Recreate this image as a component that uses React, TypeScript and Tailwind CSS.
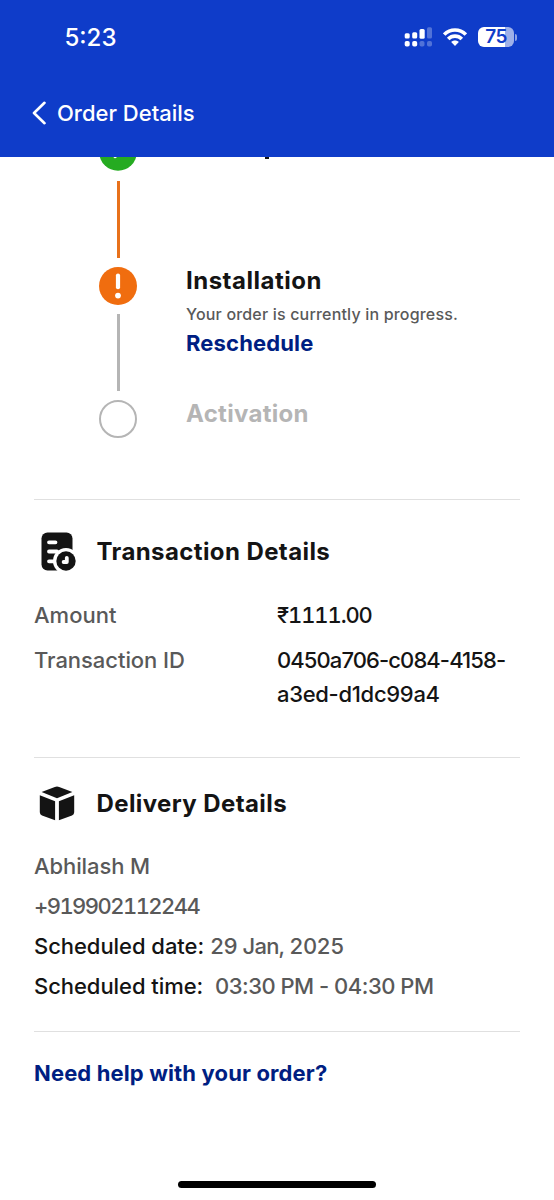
import type { ReactNode } from "react";

function StatusBar() {
  return (
    <div className="flex h-[74px] items-center justify-between pr-[37px] pl-[64.5px]">
      <span className="pt-[2px] text-[24px] leading-[30px] font-medium">5:23</span>
      <div className="flex items-center">
        <svg className="h-5 w-[29px]" viewBox="0 0 29 20" fill="#fff">
          <rect x="0.7" y="6.2" width="5" height="5.2" rx="1.5" />
          <rect x="8.2" y="5.2" width="5" height="6.2" rx="1.5" />
          <rect x="15.5" y="2" width="5.2" height="9.8" rx="1.5" />
          <rect x="23" y="0.2" width="5" height="11.4" rx="1.5" opacity="0.28" />
          <rect x="0.7" y="14" width="5" height="5.5" rx="1.8" />
          <rect x="8.2" y="14" width="5" height="5.5" rx="1.8" />
          <rect x="15.5" y="14" width="5" height="5.5" rx="1.8" opacity="0.28" />
          <rect x="23" y="14" width="5" height="5.5" rx="1.8" opacity="0.28" />
        </svg>
        <svg className="ml-[10px] h-[19px] w-6" viewBox="0 0 24 19" fill="none" stroke="#fff" strokeWidth="3.6">
          <path d="M1.2 6.6C7.2 0.4 16.8 0.4 22.8 6.6" />
          <path d="M5.2 11C9 7.2 15 7.2 18.8 11" />
          <path d="M12 18L8.2 14.1C10.2 12.1 13.8 12.1 15.8 14.1Z" fill="#fff" stroke="none" />
        </svg>
        <div className="ml-[11px] flex h-5 w-[36px] items-center justify-center rounded-[6px] bg-linear-to-r from-white from-74% to-[#9fb0e9] to-74% text-[19px] leading-5 font-semibold tracking-[-0.5px] text-[#0f3cc9]">
          75
        </div>
        <div className="ml-[1px] h-[7px] w-[2px] rounded-r-full bg-[#8fa3e5]" />
      </div>
    </div>
  );
}

function SectionTitle({ icon, children }: { icon: ReactNode; children: ReactNode }) {
  return (
    <div className="flex h-10 items-center">
      <div className="w-[62.5px] shrink-0">{icon}</div>
      <h2 className="pt-[2px] text-[24px] leading-10 font-bold tracking-[0.4px] whitespace-nowrap">{children}</h2>
    </div>
  );
}

export default function App() {
  return (
    <div className="flex h-[1200px] w-[554px] flex-col overflow-hidden bg-white font-['Inter','Liberation_Sans',sans-serif] text-[22px] font-medium text-[#141414]">
      <header className="h-[157px] shrink-0 bg-[#0f3cc9] text-white">
        <StatusBar />
        <div className="flex h-[78px] items-center pl-[32px]">
          <svg className="h-6 w-[15px]" viewBox="0 0 15 24" fill="none" stroke="#fff" strokeWidth="2.6" strokeLinecap="round" strokeLinejoin="round">
            <path d="M12.5 1.8L2 12L12.5 22.2" />
          </svg>
          <h1 className="ml-[10px] text-[22px] leading-[30px] font-medium">Order Details</h1>
        </div>
      </header>

      <main className="flex flex-col px-[34px]">
        <section className="flex h-[342px] overflow-hidden pl-[65px]">
          <div className="flex w-[38px] flex-col items-center">
            <svg className="h-[14px] w-[38px] shrink-0" viewBox="0 0 38 14">
              <circle cx="19" cy="-5" r="18.8" fill="#25ab21" />
              <path d="M12.5 -4L16.2 -0.6L20 -4.4" fill="none" stroke="#fff" strokeWidth="3.4" strokeLinecap="round" strokeLinejoin="round" />
            </svg>
            <div className="mt-[9.5px] h-[77px] w-[3px] shrink-0 bg-[#e8711b]" />
            <svg className="mt-[9px] h-[38px] w-[38px] shrink-0" viewBox="0 0 38 38">
              <circle cx="19" cy="19" r="19" fill="#f06d0f" />
              <path d="M19 8.6V20.2" stroke="#fff" strokeWidth="4.2" strokeLinecap="round" />
              <circle cx="19" cy="28.6" r="2.9" fill="#fff" />
            </svg>
            <div className="mt-[9.5px] h-[77px] w-[3px] shrink-0 bg-[#b5b5b5]" />
            <div className="mt-[9px] h-[38px] w-[38px] shrink-0 rounded-full border-[2.5px] border-[#b5b5b5]" />
          </div>
          <div className="flex flex-col pl-[49px] whitespace-nowrap">
            <div className="ml-[79px] h-[2px] w-[4px] bg-[#141414]" />
            <h2 className="mt-[106px] text-[24px] leading-8 font-bold tracking-[0.5px]">Installation</h2>
            <p className="mt-[5px] text-[16px] leading-6 tracking-[0.18px] text-[#595959]">Your order is currently in progress.</p>
            <a className="mt-[1px] text-[22px] leading-8 font-bold tracking-[0.15px] text-[#001e82]">Reschedule</a>
            <h2 className="mt-[39px] text-[24px] leading-8 font-bold tracking-[0.3px] text-[#b5b5b5]">Activation</h2>
          </div>
        </section>

        <section className="h-[258px] border-t-[1.5px] border-[#e0e0e0] pt-[31px]">
          <SectionTitle
            icon={
              <svg className="ml-[7px] h-[39px] w-[36px]" viewBox="0 0 36 39">
                <rect x="0.5" y="0.5" width="31" height="38" rx="6" fill="#141414" />
                <path d="M8 10.3H14.5M8 19.5H16M8 29.3H13" stroke="#fff" strokeWidth="3.8" strokeLinecap="round" />
                <circle cx="25" cy="29" r="13" fill="#fff" />
                <circle cx="25" cy="29" r="9.7" fill="#141414" />
                <path d="M25.8 25.8V30H22.6" fill="none" stroke="#fff" strokeWidth="3.8" strokeLinecap="round" strokeLinejoin="round" />
              </svg>
            }
          >
            Transaction Details
          </SectionTitle>
          <dl className="mt-[27px] grid grid-cols-[243px_1fr] gap-y-[11px] leading-[34px] whitespace-nowrap">
            <dt className="text-[#595959]">Amount</dt>
            <dd className="tracking-[-1.1px] tabular-nums">₹1111.00</dd>
            <dt className="tracking-[-0.05px] text-[#595959]">Transaction ID</dt>
            <dd>
              <span className="tracking-[-0.9px]">0450a706-c084-4158-</span>
              <br />
              <span className="tracking-[-0.3px]">a3ed-d1dc99a4</span>
            </dd>
          </dl>
        </section>

        <section className="h-[274px] border-t-[1.5px] border-[#e0e0e0] pt-[25px]">
          <SectionTitle
            icon={
              <svg className="ml-[5px] h-[35px] w-[36px]" viewBox="0 0 36 35" fill="#141414">
                <path d="M15.8 1L2.6 6.1L18 12.2L33.4 6.1L20.2 1Q18 0.2 15.8 1Z" />
                <path d="M0.8 9.3L16.1 15.3V34.3L3 29.4Q0.8 28.6 0.8 26.3Z" />
                <path d="M35.2 9.3L19.9 15.3V34.3L33 29.4Q35.2 28.6 35.2 26.3Z" />
              </svg>
            }
          >
            Delivery Details
          </SectionTitle>
          <div className="mt-[23px] flex flex-col leading-10 whitespace-pre text-[#595959]">
            <p className="tracking-[-0.1px]">Abhilash M</p>
            <p className="tracking-[-1.55px] tabular-nums">+919902112244</p>
            <p><span className="tracking-[-0.05px] text-[#141414]">Scheduled date:</span> <span className="tracking-[-0.65px] tabular-nums">29 Jan, 2025</span></p>
            <p><span className="tracking-[-0.05px] text-[#141414]">Scheduled time:</span>{"  "}<span className="tracking-[-0.5px]">03:30 PM - 04:30 PM</span></p>
          </div>
        </section>

        <section className="border-t-[1.5px] border-[#e0e0e0] pt-[25px]">
          <a className="block leading-8 font-bold tracking-[0.13px] whitespace-nowrap text-[#001e82]">Need help with your order?</a>
        </section>
      </main>

      <div className="mt-auto mb-[12px] h-[7px] w-[198px] shrink-0 self-center rounded-full bg-black" />
    </div>
  );
}
